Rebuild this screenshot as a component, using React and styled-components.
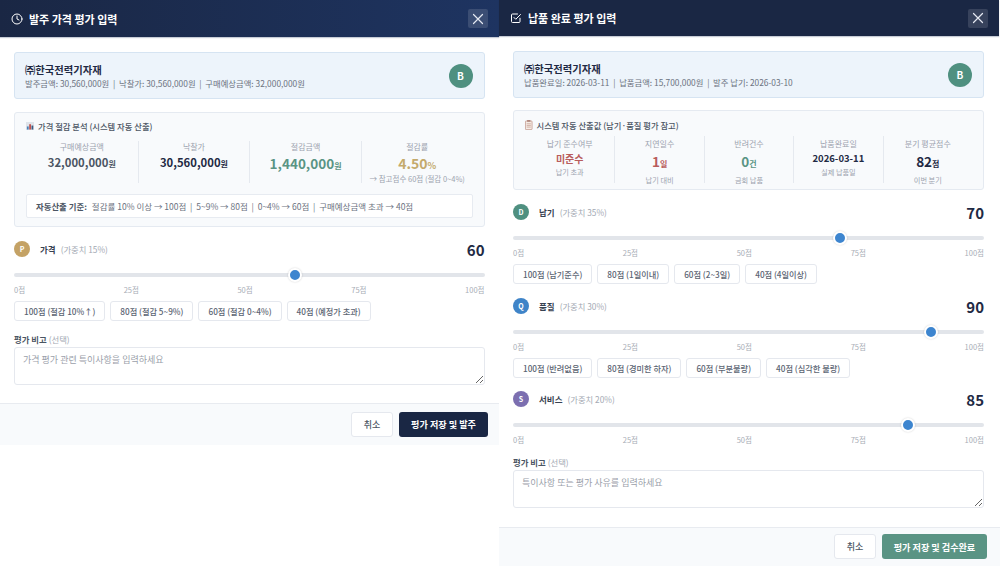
import React from "react";
import styled, { createGlobalStyle } from "styled-components";

const Global = createGlobalStyle`
  html, body { margin: 0; padding: 0; background: #fff; }
  * { box-sizing: border-box; }
  body { font-family: "Noto Sans CJK KR", "Noto Sans", sans-serif; color: #1f2937; }
`;
const Page = styled.div`
  width: 1000px; height: 570px; display: flex; overflow: hidden; background: #fff;
`;
const Panel = styled.section`
  width: ${p => p.$w}px; flex: none; display: flex; flex-direction: column;
`;
const Header = styled.header`
  height: ${p => p.$h}px; flex: none; display: flex; align-items: center; justify-content: space-between;
  padding: 0 11px; margin-right: ${p => p.$mr}px;
  background: ${p => p.$flat ? "#1a2744" : "linear-gradient(90deg,#1a2744,#1e3461)"};
  box-shadow: 0 1px 1px rgba(30,50,90,.25);
`;
const Title = styled.h2`
  margin: 0; display: flex; align-items: center; gap: 6px; font-size: 11px; font-weight: 700; color: #fff; letter-spacing: 0;
`;
const CloseBtn = styled.button`
  width: 20px; height: 19px; padding: 0; border: 0; border-radius: 2px; background: rgba(255,255,255,.13);
  display: flex; align-items: center; justify-content: center; color: #e5e9f2;
`;
const Body = styled.div`
  padding: 15px ${p => p.$pr}px 0 14px; display: flex; flex-direction: column;
`;
const Company = styled.div`
  height: 47px; display: flex; align-items: center; justify-content: space-between; padding: 0 11px 0 10px;
  background: #edf4fb; border: 1px solid #d6e4f2; border-radius: 3px;
`;
const CompanyName = styled.div`
  font-size: 10.3px; font-weight: 700; color: #1f2a44; line-height: 14px;
`;
const CompanyMeta = styled.div`
  font-size: 8.35px; color: #6b7280; line-height: 12px; white-space: pre;
`;
const Grade = styled.div`
  width: 24px; height: 24px; border-radius: 50%; background: #4f9080; color: #fff; font-size: 10px; font-weight: 700;
  display: flex; align-items: center; justify-content: center;
`;
const Analysis = styled.div`
  margin-top: ${p => p.$mt}px; height: ${p => p.$h}px; padding: ${p => p.$pad};
  background: #f8fafc; border: 1px solid #e5eaf1; border-radius: 3px;
`;
const AnalysisTitle = styled.div`
  display: flex; align-items: center; gap: 4px; height: 12px; font-size: 8.3px; font-weight: 500; color: #4b5563;
`;
const Stats = styled.div`
  display: grid; grid-template-columns: repeat(${p => p.$n}, 1fr); margin-top: ${p => p.$mt}px;
`;
const Stat = styled.div`
  height: ${p => p.$h}px; padding-top: ${p => p.$pt || 0}px; text-align: center; display: flex; flex-direction: column; align-items: center;
  border-left: ${p => p.$first ? "0" : "1px solid #e5e9ef"};
`;
const StatLabel = styled.div`
  font-size: 8px; line-height: 12px; color: #9ca3af; white-space: nowrap;
`;
const StatValue = styled.div`
  font-size: ${p => p.$size}px; font-weight: 700; color: ${p => p.$color}; line-height: ${p => p.$lh}px; white-space: nowrap;
  small { font-size: ${p => p.$unit}px; font-weight: 700; }
`;
const StatNote = styled.div`
  margin-top: ${p => p.$mt || 0}px; font-size: ${p => p.$size || 7.2}px; line-height: 11px; color: #9ca3af; white-space: nowrap;
`;
const Basis = styled.div`
  margin-top: 11px; height: 24px; display: flex; align-items: center; gap: 5px; padding: 0 9px;
  background: #fff; border: 1px solid #e7ebf1; border-radius: 2px; font-size: 8.5px; color: #6b7280; white-space: pre;
  b { font-weight: 700; color: #4b5563; font-size: 8.4px; }
`;
const Criterion = styled.div`
  margin-top: ${p => p.$mt}px;
`;
const CritHead = styled.div`
  height: 20px; display: flex; align-items: center; justify-content: space-between;
`;
const CritLabel = styled.div`
  display: flex; align-items: center; font-size: 8.5px; font-weight: 700; color: #374151;
  span { margin-left: 5px; font-size: 8.3px; font-weight: 400; color: #a3a9b3; }
`;
const Badge = styled.div`
  width: 16px; height: 16px; margin-right: 10px; border-radius: 50%; background: ${p => p.$bg}; color: #fff; font-size: 7px; font-weight: 700;
  display: flex; align-items: center; justify-content: center;
`;
const Score = styled.div`
  margin-top: 1px; font-size: 15px; font-weight: 700; color: #1f2a44; line-height: 20px;
`;
const Range = styled.input`
  display: block; width: 100%; height: 14px; margin: 9px 0 0; appearance: none; -webkit-appearance: none; background: transparent;
  &::-webkit-slider-runnable-track { height: 4px; border-radius: 2px; background: #e2e5ea; }
  &::-webkit-slider-thumb {
    -webkit-appearance: none; width: 14px; height: 14px; margin-top: -5px; border-radius: 50%;
    background: #3d85cf; border: 2px solid #fff; box-shadow: 0 0 2px rgba(0,0,0,.18);
  }
`;
const Scale = styled.div`
  margin-top: 2px; display: flex; justify-content: space-between; font-size: 7.5px; line-height: 11px; color: #a8adb6;
`;
const Chips = styled.div`
  margin-top: 6px; display: flex; gap: 5px;
`;
const Chip = styled.button`
  height: 20px; padding: 0 9px; background: #fff; border: 1px solid #e5e8ee; border-radius: 3px;
  font: 500 8.2px "Noto Sans CJK KR", sans-serif; color: #5b6472; white-space: nowrap;
`;
const NoteLabel = styled.div`
  margin-top: ${p => p.$mt}px; font-size: 8.4px; line-height: 12px; font-weight: 700; color: #4b5563;
  span { font-weight: 400; color: #a3a9b3; }
`;
const Note = styled.textarea`
  display: block; width: 100%; height: 38px; margin-top: 2px; padding: 5.5px 8px; border: 1px solid #e5e8ee; border-radius: 3px;
  background: #fff; font: 400 9px/13px "Noto Sans CJK KR", sans-serif; color: #374151; outline: 0;
  &::placeholder { color: #9aa0aa; }
`;
const Footer = styled.footer`
  margin-top: ${p => p.$mt}px; height: ${p => p.$h}px; display: flex; align-items: center; justify-content: flex-end; gap: 6px; padding: 0 ${p => p.$pr}px 0 0;
  background: #f8fafc; border-top: 1px solid #e8ebf0;
`;
const Cancel = styled.button`
  width: 42px; height: 25px; background: #fff; border: 1px solid #e5e8ee; border-radius: 3px;
  font: 500 9px "Noto Sans CJK KR", sans-serif; color: #4b5563;
`;
const Save = styled.button`
  width: ${p => p.$w}px; height: 25px; background: ${p => p.$bg}; border: 0; border-radius: 3px;
  font: 700 9.1px "Noto Sans CJK KR", sans-serif; color: #fff;
`;

const X = () => (
  <svg width="12" height="12" viewBox="0 0 12 12" fill="none" stroke="currentColor" strokeWidth="1.2" strokeLinecap="round"><path d="M1.5 1.5l9 9M10.5 1.5l-9 9" /></svg>
);
const Clock = () => (
  <svg width="12" height="12" viewBox="0 0 24 24" fill="none" stroke="#fff" strokeWidth="2" strokeLinecap="round" strokeLinejoin="round"><circle cx="12" cy="12" r="10" /><path d="M12 6v6l4 2" /></svg>
);
const Check = () => (
  <svg width="12" height="12" viewBox="0 0 24 24" fill="none" stroke="#fff" strokeWidth="2" strokeLinecap="round" strokeLinejoin="round"><path d="M20 12.5V19a2 2 0 0 1-2 2H5a2 2 0 0 1-2-2V6a2 2 0 0 1 2-2h10" /><path d="M8 11l3.5 3.5L21 5" /></svg>
);
const ChartIcon = () => (
  <svg width="8" height="8" viewBox="0 0 9 9"><rect width="9" height="9" fill="#dfe4ea" /><rect x="1" y="5" width="2" height="3.5" fill="#4a7fb5" /><rect x="3.6" y="2.5" width="2" height="6" fill="#c0504d" /><rect x="6.2" y="4" width="2" height="4.5" fill="#3c5a80" /></svg>
);
const ClipIcon = () => (
  <svg width="7.5" height="10" viewBox="0 0 9 12"><rect x=".5" y="1.2" width="8" height="10.3" rx=".8" fill="#f5ebe4" stroke="#b98a7c" strokeWidth=".8" /><rect x="2.5" y=".2" width="4" height="1.8" fill="#a87c70" /><path d="M2 4.5h5M2 6.5h5M2 8.5h5" stroke="#b98a7c" strokeWidth=".7" /></svg>
);

const Slider = ({ value }) => (
  <>
    <Range type="range" min="0" max="100" defaultValue={value} />
    <Scale><span>0점</span><span>25점</span><span>50점</span><span>75점</span><span>100점</span></Scale>
  </>
);

const Crit = ({ mt, letter, bg, name, weight, score, chips }) => (
  <Criterion $mt={mt}>
    <CritHead>
      <CritLabel><Badge $bg={bg}>{letter}</Badge>{name}<span>(가중치 {weight}%)</span></CritLabel>
      <Score>{score}</Score>
    </CritHead>
    <Slider value={score} />
    {chips && <Chips>{chips.map(c => <Chip key={c} type="button">{c}</Chip>)}</Chips>}
  </Criterion>
);

export default function App() {
  return (
    <Page>
      <Global />
      <Panel $w={499}>
        <Header $h={37} $mr={0}>
          <Title><Clock />발주 가격 평가 입력</Title>
          <CloseBtn type="button"><X /></CloseBtn>
        </Header>
        <Body $pr={14.5}>
          <Company>
            <div>
              <CompanyName>㈜한국전력기자재</CompanyName>
              <CompanyMeta>{"발주금액: 30,560,000원  |  낙찰가: 30,560,000원  |  구매예상금액: 32,000,000원"}</CompanyMeta>
            </div>
            <Grade>B</Grade>
          </Company>
          <Analysis $mt={13} $h={115} $pad="7px 11px">
            <AnalysisTitle><ChartIcon />가격 절감 분석 (시스템 자동 산출)</AnalysisTitle>
            <Stats $n={4} $mt={9}>
              <Stat $first $h={42}><StatLabel>구매예상금액</StatLabel><StatValue $size={11.3} $unit={8} $lh={18} $color="#4b5563">32,000,000<small>원</small></StatValue></Stat>
              <Stat $h={42}><StatLabel>낙찰가</StatLabel><StatValue $size={11.3} $unit={8} $lh={18} $color="#1f2a44">30,560,000<small>원</small></StatValue></Stat>
              <Stat $h={42}><StatLabel>절감금액</StatLabel><StatValue $size={13.5} $unit={8} $lh={20} $color="#5a9484">1,440,000<small>원</small></StatValue></Stat>
              <Stat $h={42}><StatLabel>절감률</StatLabel><StatValue $size={14} $unit={9} $lh={20} $color="#c4aa6c">4.50<small>%</small></StatValue><StatNote $mt={-3} $size={7.5}>→ 참고점수 60점 (절감 0~4%)</StatNote></Stat>
            </Stats>
            <Basis><b>자동산출 기준:</b>{"절감률 10% 이상 → 100점  |  5~9% → 80점  |  0~4% → 60점  |  구매예상금액 초과 → 40점"}</Basis>
          </Analysis>
          <Crit mt={12} letter="P" bg="#c4a265" name="가격" weight="15" score={60}
            chips={["100점 (절감 10%↑)", "80점 (절감 5~9%)", "60점 (절감 0~4%)", "40점 (예정가 초과)"]} />
          <NoteLabel $mt={11.5}>평가 비고 <span>(선택)</span></NoteLabel>
          <Note placeholder="가격 평가 관련 특이사항을 입력하세요" />
        </Body>
        <Footer $mt={18} $h={42} $pr={11}>
          <Cancel type="button">취소</Cancel>
          <Save type="button" $w={89} $bg="#1a2744">평가 저장 및 발주</Save>
        </Footer>
      </Panel>
      <Panel $w={501}>
        <Header $h={36} $flat $mr={1.5}>
          <Title><Check />납품 완료 평가 입력</Title>
          <CloseBtn type="button"><X /></CloseBtn>
        </Header>
        <Body $pr={16}>
          <Company>
            <div>
              <CompanyName>㈜한국전력기자재</CompanyName>
              <CompanyMeta>{"납품완료일: 2026-03-11  |  납품금액: 15,700,000원  |  발주 납기: 2026-03-10"}</CompanyMeta>
            </div>
            <Grade>B</Grade>
          </Company>
          <Analysis $mt={12} $h={80} $pad="8px 11px 0">
            <AnalysisTitle><ClipIcon />시스템 자동 산출값 (납기·품질 평가 참고)</AnalysisTitle>
            <Stats $n={5} $mt={5}>
              <Stat $first $h={47} $pt={2}><StatLabel>납기 준수여부</StatLabel><StatValue $size={10} $unit={8} $lh={17} $color="#b85c5c">미준수</StatValue><StatNote>납기 초과</StatNote></Stat>
              <Stat $h={47} $pt={2}><StatLabel>지연일수</StatLabel><StatValue $size={13.5} $unit={8} $lh={22} $color="#b85c5c">1<small>일</small></StatValue><StatNote>납기 대비</StatNote></Stat>
              <Stat $h={47} $pt={2}><StatLabel>반려건수</StatLabel><StatValue $size={13.5} $unit={8} $lh={22} $color="#5a9484">0<small>건</small></StatValue><StatNote>금회 납품</StatNote></Stat>
              <Stat $h={47} $pt={2}><StatLabel>납품완료일</StatLabel><StatValue $size={9.5} $unit={8} $lh={17} $color="#1f2a44">2026-03-11</StatValue><StatNote>실제 납품일</StatNote></Stat>
              <Stat $h={47} $pt={2}><StatLabel>분기 평균점수</StatLabel><StatValue $size={13.5} $unit={8} $lh={22} $color="#1f2a44">82<small>점</small></StatValue><StatNote>이번 분기</StatNote></Stat>
            </Stats>
          </Analysis>
          <Crit mt={12} letter="D" bg="#4f9080" name="납기" weight="35" score={70}
            chips={["100점 (납기준수)", "80점 (1일이내)", "60점 (2~3일)", "40점 (4일이상)"]} />
          <Crit mt={12} letter="Q" bg="#3f84c8" name="품질" weight="30" score={90}
            chips={["100점 (반려없음)", "80점 (경미한 하자)", "60점 (부분불량)", "40점 (심각한 불량)"]} />
          <Crit mt={11} letter="S" bg="#7c6fb0" name="서비스" weight="20" score={85} />
          <NoteLabel $mt={10.5}>평가 비고 <span>(선택)</span></NoteLabel>
          <Note placeholder="특이사항 또는 평가 사유를 입력하세요" />
        </Body>
        <Footer $mt={19} $h={39} $pr={13}>
          <Cancel type="button">취소</Cancel>
          <Save type="button" $w={105} $bg="#5a9484">평가 저장 및 검수완료</Save>
        </Footer>
      </Panel>
    </Page>
  );
}
